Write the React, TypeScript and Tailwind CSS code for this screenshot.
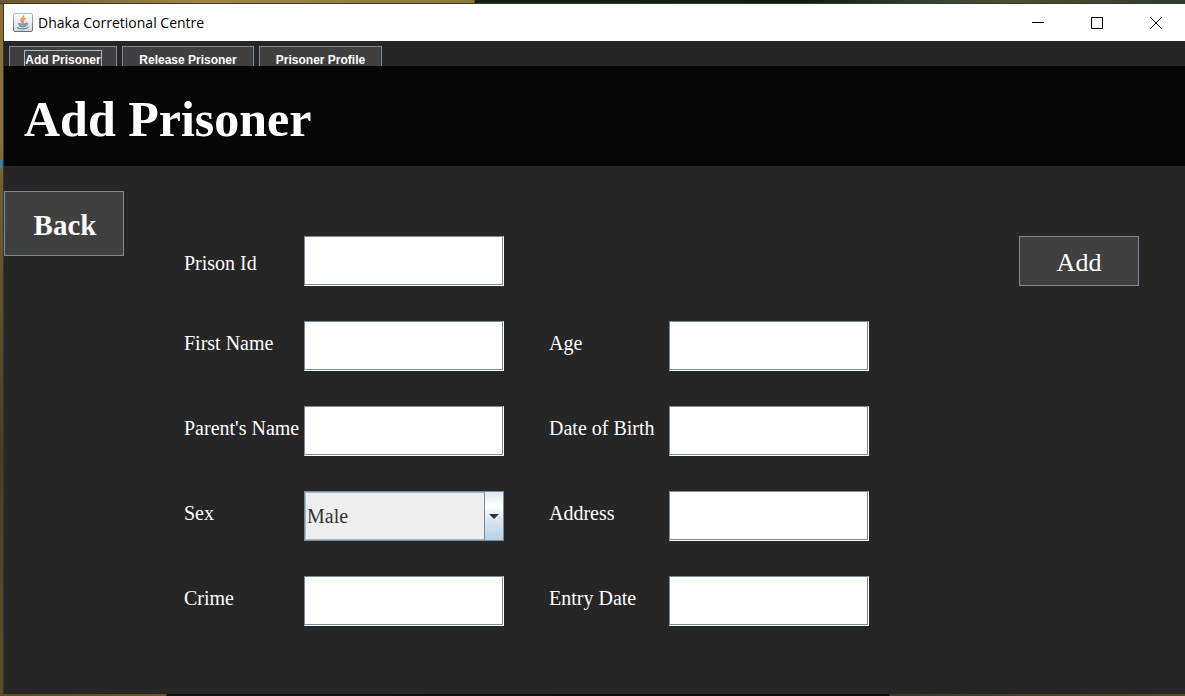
import type { ReactNode } from "react";

const serif = "font-['Liberation_Serif',serif]";

function JavaIcon() {
  return (
    <svg viewBox="0 0 20 20" className="h-5 w-5 shrink-0" aria-hidden="true">
      <defs>
        <linearGradient id="tile" x1="0" y1="0" x2="0" y2="1">
          <stop offset="0" stopColor="#ffffff" />
          <stop offset="1" stopColor="#d3d8dc" />
        </linearGradient>
        <linearGradient id="edge" x1="0" y1="0" x2="0" y2="1">
          <stop offset="0" stopColor="#a9bac8" />
          <stop offset="1" stopColor="#557088" />
        </linearGradient>
      </defs>
      <rect x="0.5" y="0.5" width="19" height="18" rx="1.5" fill="url(#tile)" stroke="url(#edge)" />
      <path d="M10.500 3c1 1.700-3.200 2.900-2.600 4.500.2.800 1.300 1.200 1.300 2M12.200 5.500c-1.800.7-2.700 1.500-1.900 2.500.5.700.3 1-.2 1.500" fill="none" stroke="#eb9448" strokeWidth="1.600" strokeLinecap="round" />
      <path d="M5.500 10.400c2 .7 5.500.7 7.500 0l-.8 3c-1.600.7-3.800.7-5.400 0z" fill="#8ea5b9" stroke="#6f8ca6" strokeWidth="1" strokeLinejoin="round" />
      <path d="M13 10.300c2.400-.6 2.200 1.700-.4 2.300M4.500 14.700c2 1.500 8.500 1.500 10.500-.2" fill="none" stroke="#6f8ca6" strokeWidth="1.200" strokeLinecap="round" />
    </svg>
  );
}

function WindowButton({ label, children }: { label: string; children: ReactNode }) {
  return (
    <button type="button" aria-label={label} className="flex h-full w-[59px] items-center justify-center">
      <svg viewBox="0 0 12 12" className="h-3 w-3" fill="none" stroke="#000" aria-hidden="true">
        {children}
      </svg>
    </button>
  );
}

function Label({ id, children, first = false }: { id: string; children: ReactNode; first?: boolean }) {
  return (
    <label htmlFor={id} className={`whitespace-nowrap text-xl leading-6 text-white ${first ? "pt-1" : "pb-[6px]"}`}>
      {children}
    </label>
  );
}

function TextField({ id, label, first }: { id: string; label: string; first?: boolean }) {
  return (
    <>
      <Label id={id} first={first}>{label}</Label>
      <input
        id={id}
        type="text"
        className="h-[50px] w-full border border-b-white border-l-[#7a8a99] border-r-white border-t-[#7a8a99] bg-white px-1 text-xl text-[#333] shadow-[inset_-1px_-1px_0_#7a8a99] outline-none"
      />
    </>
  );
}

export default function App() {
  return (
    <div className="flex min-h-screen flex-col overflow-hidden bg-[#262626]">
      <div className="h-1 shrink-0 border-b border-[#39372a] bg-[linear-gradient(90deg,#6b5931_0%,#a18445_17%,#8c783f_40%,#172018_40.100%,#141b15_68%,#3b4431_80%,#4b4e32_86%,#2e3729_100%)]" />
      <div className="flex grow">
        <div className="relative w-1 shrink-0 overflow-hidden border-r border-[#3a3726] bg-[linear-gradient(180deg,#8b7239_0%,#84703d_20%,#6b5f35_27%,#453f2a_65%,#57502f_100%)]">
          <span aria-hidden="true" className="absolute left-0 top-[152px] font-['Liberation_Sans',sans-serif] text-xs font-bold text-[#167fd0]">
            t
          </span>
        </div>
        <div className="flex grow flex-col">
          <header className="flex h-[37px] shrink-0 items-center bg-white">
            <div className="flex items-center gap-[5px] pl-[9px]">
              <JavaIcon />
              <span className="whitespace-nowrap font-['Open_Sans',sans-serif] text-sm leading-5 text-black">
                Dhaka Corretional Centre
              </span>
            </div>
            <div className="ml-auto flex h-full">
              <WindowButton label="Minimize">
                <path d="M0 5.500h12" />
              </WindowButton>
              <WindowButton label="Maximize">
                <path d="M.5.500h11v11H.5z" />
              </WindowButton>
              <WindowButton label="Close">
                <path d="M.3.300l11.400 11.400M11.700.300L.3 11.700" />
              </WindowButton>
            </div>
          </header>

          <nav className="flex h-[25px] shrink-0 gap-[5px] overflow-hidden bg-[#262626] pl-[5px] pt-[5px] font-['Liberation_Sans',sans-serif] text-xs font-bold leading-4 text-white">
            <button type="button" className="flex h-[26px] w-[108px] shrink-0 items-center justify-center whitespace-nowrap border border-[#7a8a99] bg-[#404040]">
              <span className="border border-b-0 border-[#a3b8cc] pt-px">Add Prisoner</span>
            </button>
            <button type="button" className="flex h-[26px] w-[132px] shrink-0 items-center justify-center whitespace-nowrap border border-[#7a8a99] bg-[#404040] pt-[2px]">
              Release Prisoner
            </button>
            <button type="button" className="flex h-[26px] w-[123px] shrink-0 items-center justify-center whitespace-nowrap border border-[#7a8a99] bg-[#404040] pt-[2px]">
              Prisoner Profile
            </button>
          </nav>

          <div className={`flex h-[100px] shrink-0 items-center bg-[#060606] pl-5 pt-[6px] ${serif}`}>
            <h1 className="text-[50px] font-bold leading-none text-white">Add Prisoner</h1>
          </div>

          <main className={`flex grow items-start bg-[#262626] ${serif}`}>
            <button type="button" className="mt-[25px] h-[65px] w-[120px] shrink-0 border border-[#7a8a99] bg-[#404040] pl-[2px] pt-[2px] text-[29px] leading-9 font-bold text-white">
              Back
            </button>
            <form className="flex grow items-start pl-[60px] pr-[46px] pt-[70px]" onSubmit={(e) => e.preventDefault()}>
              <div className="flex flex-col gap-[35px]">
                <div className="grid grid-cols-[120px_200px] items-center">
                  <TextField id="prison-id" label="Prison Id" first />
                </div>
                <div className="grid grid-cols-[120px_200px_120px_200px] items-center gap-y-[35px] [&>*:nth-child(4n+3)]:ml-[45px] [&>*:nth-child(4n)]:ml-[45px]">
                  <TextField id="first-name" label="First Name" />
                  <TextField id="age" label="Age" />
                  <TextField id="parent-name" label="Parent's Name" />
                  <TextField id="birth-date" label="Date of Birth" />
                  <Label id="sex">Sex</Label>
                  <div className="relative">
                    <select
                      id="sex"
                      defaultValue="Male"
                      className="block h-[50px] w-full appearance-none rounded-none border border-[#7a8a99] bg-[#eee] pl-[2px] pr-6 text-xl text-[#333] shadow-[inset_0_0_0_1px_#a3b8cc] outline-none"
                    >
                      <option>Male</option>
                      <option>Female</option>
                    </select>
                    <span className="pointer-events-none absolute inset-y-0 right-0 flex w-5 items-center justify-center border border-[#7a8a99] bg-[linear-gradient(180deg,#dde8f3_0%,#ffffff_30%,#dde8f3_55%,#b8cfe5_100%)]">
                      <svg viewBox="0 0 10 5" className="h-[5px] w-[10px]" aria-hidden="true">
                        <path d="M0 0h10L5 5z" fill="#333" />
                      </svg>
                    </span>
                  </div>
                  <TextField id="address" label="Address" />
                  <TextField id="crime" label="Crime" />
                  <TextField id="entry-date" label="Entry Date" />
                </div>
              </div>
              <button type="submit" className="ml-auto h-[50px] w-[120px] shrink-0 border border-[#7a8a99] bg-[#404040] pt-1 text-[26px] leading-8 text-white">
                Add
              </button>
            </form>
          </main>
        </div>
      </div>
      <div className="h-[2px] shrink-0 bg-[linear-gradient(90deg,#554d2d_0%,#665631_14%,#11130f_14.100%,#0b0d0b_75%,#34372a_75.100%,#534a2c_100%)]" />
    </div>
  );
}
